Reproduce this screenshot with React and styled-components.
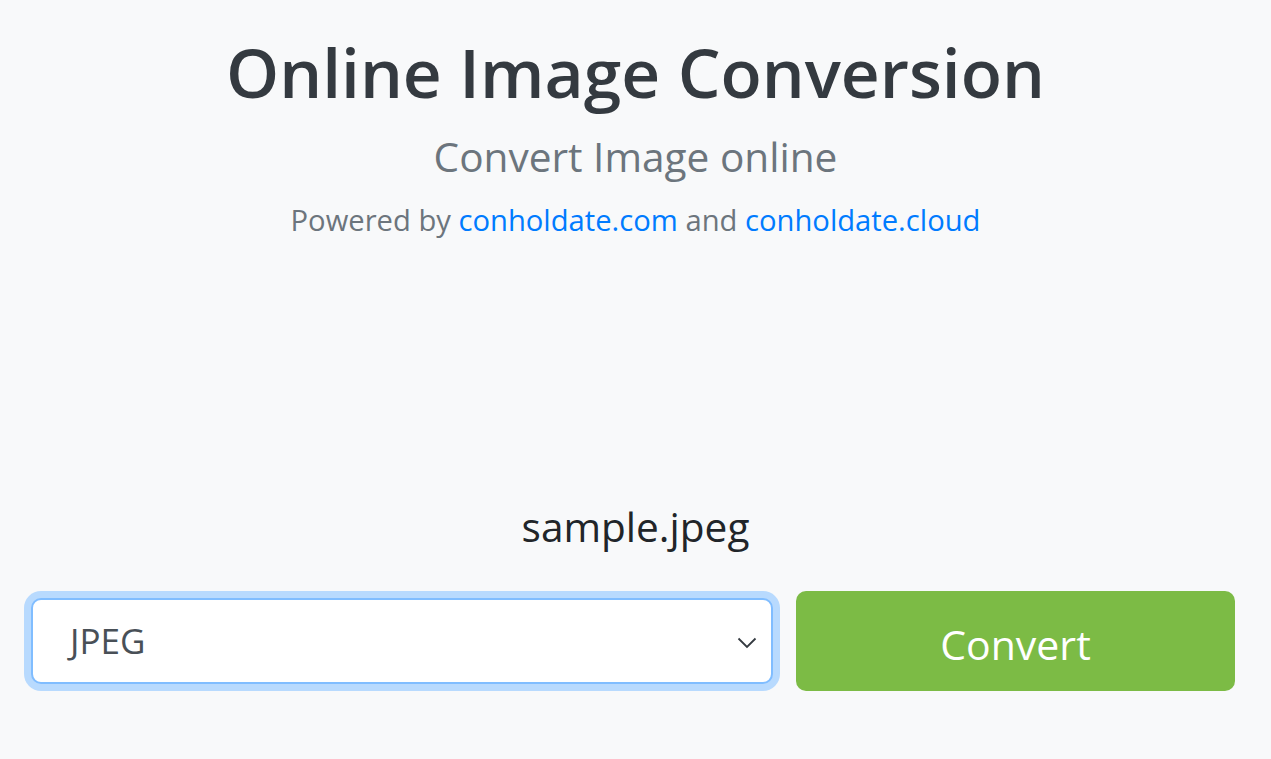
import React from 'react'
import styled, { createGlobalStyle } from 'styled-components'

const GlobalStyle = createGlobalStyle`
  html, body {
    margin: 0;
    padding: 0;
    background: #f8f9fa;
    font-family: "Open Sans", "Noto Sans", sans-serif;
  }
`;

const Page = styled.div`
  width: 1271px;
  height: 759px;
  background: #f8f9fa;
  display: flex;
  flex-direction: column;
  align-items: center;
`;

const Header = styled.header`
  display: flex;
  flex-direction: column;
  align-items: center;
  padding-top: 32px;
`;

const Title = styled.h1`
  margin: 0;
  font-size: 67.6px;
  font-weight: 600;
  line-height: 1.2;
  color: #343a40;
`;

const Subtitle = styled.h2`
  margin: 20px 0 0;
  font-size: 40.6px;
  font-weight: 400;
  line-height: 1.2;
  color: #6c757d;
`;

const Powered = styled.p`
  margin: 21px 0 0;
  font-size: 29.2px;
  line-height: 1.2;
  color: #6c757d;
`;

const Link = styled.a`
  color: #007bff;
  text-decoration: none;
`;

const FileName = styled.div`
  margin-top: 265px;
  font-size: 40.6px;
  line-height: 1.2;
  color: #212529;
`;

const Row = styled.div`
  margin-top: 46px;
  display: flex;
  gap: 23px;
  align-self: stretch;
  padding: 0 36px 0 31px;
`;

const SelectBox = styled.div`
  position: relative;
  width: 742px;
  height: 86px;
  box-sizing: border-box;
  background: #fff;
  border: 2px solid #80bdff;
  border-radius: 10px;
  box-shadow: 0 0 0 7px #b8dafe;
  display: flex;
  align-items: center;
  padding-left: 37px;
  font-size: 35px;
  color: #495057;
`;

const Chevron = styled.svg`
  position: absolute;
  right: 14px;
  top: 37px;
`;

const ConvertButton = styled.button`
  width: 439px;
  height: 100px;
  margin-top: -7px;
  padding: 6px 0 0;
  border: none;
  border-radius: 10px;
  background: #7cbb45;
  color: #fff;
  font-family: inherit;
  font-size: 41px;
  cursor: pointer;
`;

export default function App() {
  return (
    <Page>
      <GlobalStyle />
      <Header>
        <Title>Online Image Conversion</Title>
        <Subtitle>Convert Image online</Subtitle>
        <Powered>
          Powered by <Link href="#">conholdate.com</Link> and <Link href="#">conholdate.cloud</Link>
        </Powered>
      </Header>
      <FileName>sample.jpeg</FileName>
      <Row>
        <SelectBox>
          JPEG
          <Chevron width="20" height="12" viewBox="0 0 20 12">
            <path d="M1.5 1.5 L10 10 L18.5 1.5" fill="none" stroke="#343a40" strokeWidth="1.8" />
          </Chevron>
        </SelectBox>
        <ConvertButton>Convert</ConvertButton>
      </Row>
    </Page>
  )
}
